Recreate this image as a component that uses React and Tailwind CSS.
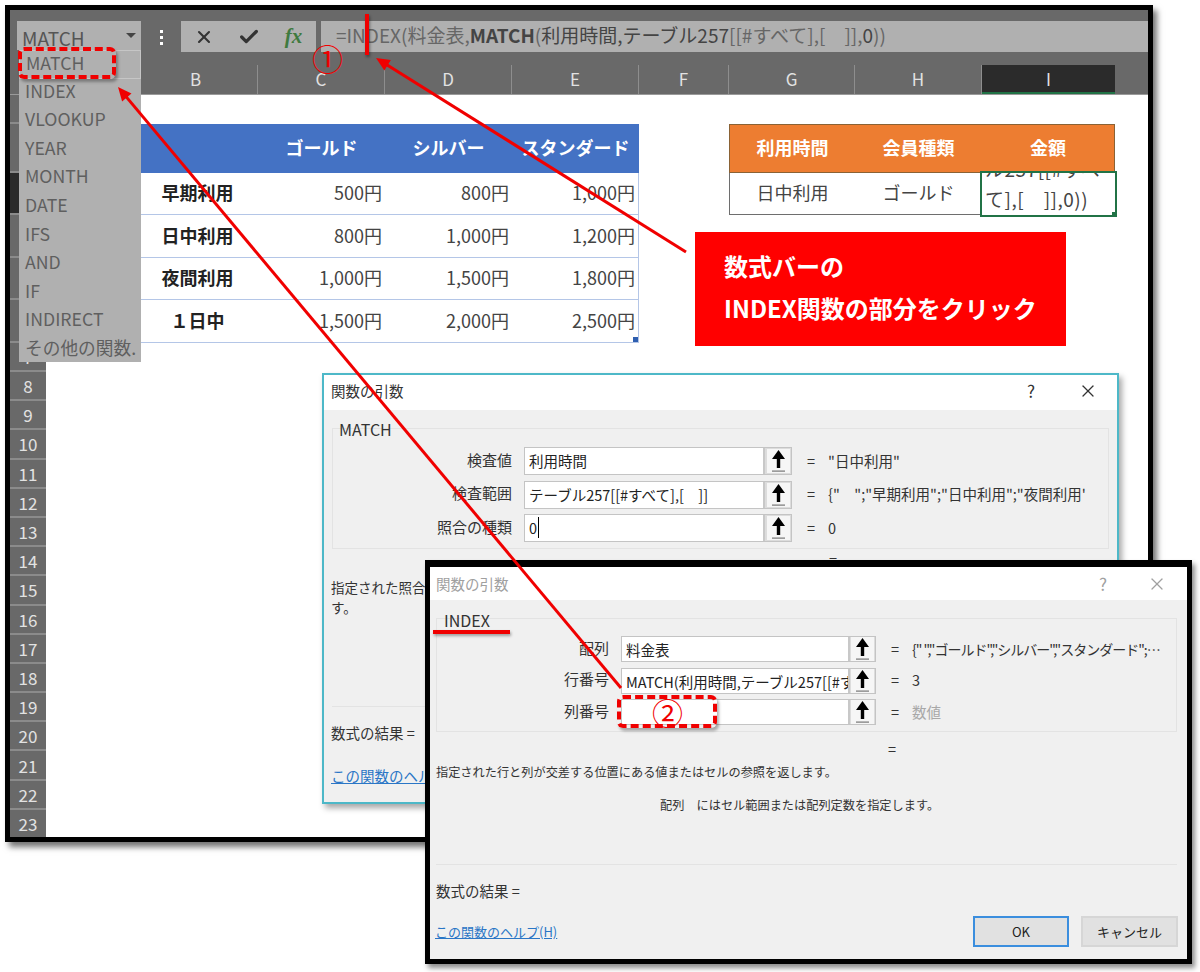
import React from "react";
import { X, Check } from "lucide-react";

const columns = ["", "B", "C", "D", "E", "F", "G", "H"];

const prices = [
  { label: "早期利用", values: ["500円", "800円", "1,000円"] },
  { label: "日中利用", values: ["800円", "1,000円", "1,200円"] },
  { label: "夜間利用", values: ["1,000円", "1,500円", "1,800円"] },
  { label: "１日中", values: ["1,500円", "2,000円", "2,500円"] },
];

const functions = ["MATCH", "INDEX", "VLOOKUP", "YEAR", "MONTH", "DATE", "IFS", "AND", "IF", "INDIRECT", "その他の関数."];

const RowHead = ({ n, active }) => (
  <div className={`col-start-1 flex items-center justify-center border-b-2 border-[#8b8b8b] text-[17px] leading-none ${active ? "bg-[#2b2b2b] text-white" : "bg-[#696969] text-[#e2e2e2]"}`}>
    {n}
  </div>
);

const UpArrow = () => (
  <svg width="17" height="24" viewBox="0 0 17 24" className="text-black">
    <path d="M8.5 1 L15 10 L10.2 10 L10.2 19 L6.8 19 L6.8 10 L2 10 Z" fill="currentColor" />
    <rect x="2" y="21.5" width="13" height="1.2" fill="#777" />
  </svg>
);

const ArgRow = ({ cols, label, value, result, dim, h, btn }) => (
  <div className={`grid items-center gap-x-3 ${cols}`}>
    <div className="pb-[2px] text-right text-[15px] text-[#333]">{label}</div>
    <div className={`flex min-w-0 border border-[#c4c4c4] bg-white ${h}`}>
      <div className="min-w-0 flex-1 overflow-hidden whitespace-nowrap pl-1 text-[14.5px] leading-[25px] text-[#222]">{value}</div>
      <div className={`flex shrink-0 items-center justify-center border-l-2 border-[#c8c8c8] bg-[#dcdcdc] ${btn}`}>
        <div className="flex items-center justify-center bg-[#f6f6f6] px-[3px]">
          <UpArrow />
        </div>
      </div>
    </div>
    <div className={`flex gap-[13px] whitespace-nowrap pb-[1px] pl-[3px] text-[14.5px] ${dim ? "text-[#a8a8a8]" : "text-[#333]"}`}>
      <span className="text-[#333]">=</span>
      <span>{result}</span>
    </div>
  </div>
);

const Arrow = ({ x1, y1, x2, y2 }) => {
  const a = Math.atan2(y1 - y2, x1 - x2);
  const len = 15;
  const p = (d) => `${x2 + len * Math.cos(a + d)},${y2 + len * Math.sin(a + d)}`;
  return (
    <g>
      <line x1={x1} y1={y1} x2={x2 + 8 * Math.cos(a)} y2={y2 + 8 * Math.sin(a)} stroke="#f00000" strokeWidth="3" />
      <polygon points={`${x2},${y2} ${p(0.42)} ${p(-0.42)}`} fill="#f00000" />
    </g>
  );
};

const App = () => {
  return (
    <div className="relative h-[972px] w-[1200px] overflow-hidden bg-white font-['Noto_Sans_CJK_JP','Noto_Sans',sans-serif]">
      {/* excel window */}
      <div className="ml-[5px] mt-[5px] h-[837px] w-[1148px] overflow-hidden border-[5px] border-black bg-[#696969] shadow-[4px_5px_6px_rgba(0,0,0,0.55)]">
        <div className="flex h-[55px] items-start pl-[7px] pt-[11px]">
          <div className="flex h-[29px] w-[124px] justify-between overflow-hidden bg-[#b0b0b0] pl-[5px] pr-[5px] text-[19px] leading-[34px] text-[#555]">
            <span>MATCH</span>
            <span className="mt-[12px] h-0 w-0 border-x-[5px] border-t-[5px] border-x-transparent border-t-[#444]" />
          </div>
          <div className="flex w-[40px] flex-col items-center gap-[3px] pt-[9px]">
            <span className="h-[3px] w-[3px] bg-white" />
            <span className="h-[3px] w-[3px] bg-white" />
            <span className="h-[3px] w-[3px] bg-white" />
          </div>
          <div className="grid h-[31px] w-[135px] grid-cols-3 items-center justify-items-center bg-[#b0b0b0] text-[#333]">
            <X size={20} strokeWidth={2.5} />
            <Check size={22} strokeWidth={3.5} />
            <span className="font-['Liberation_Serif',serif] text-[21px] font-bold italic text-[#3f7a3f]">fx</span>
          </div>
          <div className="ml-[5px] h-[31px] flex-1 whitespace-nowrap bg-[#b0b0b0] pl-[15px] text-[19px] leading-[28px] text-[#666]">
            =INDEX(料金表,<b className="text-[#444]">MATCH</b>(<span className="text-[#444]">利用時間,テーブル257</span>[[#すべて],[　]],<span className="text-[#444]">0</span>))
          </div>
        </div>

        <div className="grid h-[30px] grid-cols-[36px_88px_124px_127px_127px_127px_90px_126px_127px_133px_33px] border-b border-[#9a9a9a]">
          <div />
          {columns.map((c) => (
            <div key={c} className="flex items-center justify-center border-r border-[#8e8e8e] pb-[2px] text-[17px] text-[#e2e2e2]">
              {c}
            </div>
          ))}
          <div className="flex items-center justify-center border-b-2 border-[#217346] bg-[#2b2b2b] text-[17px] text-[#e2e2e2]">I</div>
          <div />
        </div>

        <div className="grid auto-rows-[29.2px] grid-cols-[36px_88px_124px_127px_127px_127px_90px_126px_127px_133px_33px] grid-rows-[29px_49px_42px_43px_42px_43px_29px] bg-white text-[18px] text-[#444]">
          <RowHead n={1} />

          <RowHead n={2} />
          <div />
          <div className="bg-[#4472c4]" />
          <div className="flex items-center justify-center bg-[#4472c4] pb-[3px] font-bold text-white">ゴールド</div>
          <div className="flex items-center justify-center bg-[#4472c4] pb-[3px] font-bold text-white">シルバー</div>
          <div className="flex items-center justify-center whitespace-nowrap bg-[#4472c4] pb-[3px] font-bold text-white">スタンダード</div>
          <div />
          <div className="flex items-center justify-center border-y border-l border-[#8a6235] bg-[#ed7d31] pb-[3px] font-bold text-white">利用時間</div>
          <div className="flex items-center justify-center border-y border-[#8a6235] bg-[#ed7d31] pb-[3px] font-bold text-white">会員種類</div>
          <div className="flex items-center justify-center border-y border-r border-[#8a6235] bg-[#ed7d31] pb-[3px] font-bold text-white">金額</div>
          <div />

          {prices.map((p, i) => (
            <React.Fragment key={p.label}>
              <RowHead n={i + 3} active={i === 0} />
              <div />
              <div className="flex items-center justify-center border-b border-[#b4c6e7] pb-[2px] pl-[3px] font-bold text-[#222]">{p.label}</div>
              {p.values.map((v, j) => (
                <div key={v + j} className={`relative flex items-center justify-end border-b border-[#b4c6e7] pb-[2px] pr-[3px] ${j === 2 ? "border-r" : ""}`}>
                  {v}
                  {i === 3 && j === 2 && <span className="absolute bottom-0 right-0 h-[5px] w-[5px] bg-[#2f5fb0]" />}
                </div>
              ))}
              {i === 0 && (
                <>
                  <div />
                  <div className="flex items-center justify-center border-b border-l border-[#6e6e6e] pb-[2px]">日中利用</div>
                  <div className="flex items-center justify-center border-b border-[#6e6e6e] pb-[2px]">ゴールド</div>
                  <div className="relative z-10 bg-white outline-2 outline-[#217346]">
                    <div className="h-full overflow-hidden pl-[3px] text-[19px] leading-[30px] tracking-[0.5px]">
                      <div className="-mt-[19px] whitespace-nowrap">ル257[[#すべ<br />て],[　]],0))</div>
                    </div>
                    <span className="absolute -bottom-[2px] -right-[2px] h-[5px] w-[5px] bg-[#217346]" />
                  </div>
                </>
              )}
            </React.Fragment>
          ))}

          {Array.from({ length: 17 }, (_, i) => (
            <RowHead key={i} n={i + 7} />
          ))}
        </div>
      </div>

      {/* name box dropdown */}
      <div className="absolute left-[19px] top-[50px] h-[312px] w-[122px] overflow-hidden bg-[#b0b0b0] text-[17.7px] text-[#5f5f5f]">
        {functions.map((f, i) => (
          <div key={f} className={`h-[28.6px] whitespace-nowrap pl-[6px] leading-[23px] ${i === 0 ? "border border-[#c6c6c6] pl-[5px]" : ""}`}>
            {f}
          </div>
        ))}
      </div>
      <div className="absolute left-[18px] top-[47px] h-[32px] w-[98px] rounded-md border-4 border-dashed border-[#f00000] shadow-[2px_3px_3px_rgba(0,0,0,0.3)]" />

      {/* callout */}
      <div className="absolute left-[695px] top-[232px] flex h-[114px] w-[371px] flex-col justify-center gap-[12px] bg-[#ff0000] pb-[4px] pl-[29px] text-[24px] font-bold leading-[30px] text-white">
        <div>数式バーの</div>
        <div className="whitespace-nowrap">INDEX関数の部分をクリック</div>
      </div>

      {/* back dialog */}
      <div className="absolute left-[322px] top-[373px] h-[431px] w-[797px] border-2 border-[#4db8c8] bg-[#f0f0f0] text-[#333] shadow-[3px_4px_6px_rgba(0,0,0,0.35)]">
        <div className="flex h-[35px] items-center justify-between bg-white pb-[3px] pl-[7px] pr-[19px] text-[14.5px]">
          <span>関数の引数</span>
          <div className="flex items-center gap-[43px] text-[17px]">
            <span>?</span>
            <X size={20} strokeWidth={1.5} />
          </div>
        </div>
        <div className="relative mx-[8px] mt-[18px] h-[121px] border border-[#e3e3e3] pt-[18px]">
          <span className="absolute -top-[12px] left-[6px] text-[16px]">MATCH</span>
          <div className="flex flex-col gap-[5.5px]">
            <ArgRow cols="grid-cols-[179px_268px_auto]" h="h-[28px]" btn="w-[28px]" label="検査値" value="利用時間" result={'"日中利用"'} />
            <ArgRow cols="grid-cols-[179px_268px_auto]" h="h-[28px]" btn="w-[28px]" label="検査範囲" value="テーブル257[[#すべて],[　]]" result={'{"　";"早期利用";"日中利用";"夜間利用\''} />
            <ArgRow cols="grid-cols-[179px_268px_auto]" h="h-[28px]" btn="w-[28px]" label="照合の種類" value={<>0<span className="ml-[1px] border-l border-black" /></>} result="0" />
          </div>
        </div>
        <div className="pl-[505px] pt-[1px] text-[14.5px] leading-[20px]">=</div>
        <div className="pl-[7px] pt-[7px] text-[13.5px] leading-[20px]">
          指定された照合の種類に従って検査範囲内を検索し、検査値と一致する要素の相対的な位置を返しま<br />す。
        </div>
        <div className="mx-[8px] mt-[89px] border-t border-[#e3e3e3]" />
        <div className="pl-[7px] pt-[15px] text-[14.5px]">数式の結果 =</div>
        <div className="pl-[7px] pt-[21px] text-[14.5px] text-[#2a76c6] underline">この関数のヘルプ(H)</div>
      </div>

      {/* front dialog */}
      <div className="absolute left-[425px] top-[560px] h-[404px] w-[767px] border-x-[5px] border-b-[5px] border-t-[7px] border-black bg-[#f0f0f0] text-[#333] shadow-[3px_4px_5px_rgba(0,0,0,0.45)]">
        <div className="flex h-[33px] items-center justify-between bg-white pl-[6px] pr-[20px] text-[14.5px] text-[#a0a0a0]">
          <span>関数の引数</span>
          <div className="flex items-center gap-[40px] text-[17px]">
            <span>?</span>
            <X size={20} strokeWidth={1.5} />
          </div>
        </div>
        <div className="relative ml-[6px] mr-[10px] mt-[18px] h-[114px] border border-[#e3e3e3] pt-[17px]">
          <span className="absolute -top-[11px] left-[7px] text-[16px]">INDEX</span>
          <div className="flex flex-col gap-[5.5px]">
            <ArgRow cols="grid-cols-[172px_255px_auto]" h="h-[26px]" btn="w-[27px]" label="配列" value="料金表" result={<span className="text-[14px] tracking-[-1px]">{'{" ","ゴールド","シルバー","スタンダード";…'}</span>} />
            <ArgRow cols="grid-cols-[172px_255px_auto]" h="h-[26px]" btn="w-[27px]" label="行番号" value="MATCH(利用時間,テーブル257[[#す" result="3" />
            <ArgRow cols="grid-cols-[172px_255px_auto]" h="h-[26px]" btn="w-[27px]" label="列番号" value="" result="数値" dim />
          </div>
        </div>
        <div className="pl-[458px] pt-[7px] text-[14.5px] leading-[20px]">=</div>
        <div className="pl-[6px] pt-[2px] text-[12.2px] leading-[22px]">指定された行と列が交差する位置にある値またはセルの参照を返します。</div>
        <div className="pl-[230px] pt-[11px] text-[12.2px] leading-[22px]">配列　にはセル範囲または配列定数を指定します。</div>
        <div className="ml-[6px] mr-[10px] mt-[48px] border-t border-[#e3e3e3]" />
        <div className="pl-[6px] pt-[16px] text-[14.5px] leading-[20px]">数式の結果 =</div>
        <div className="flex items-center justify-between pl-[5px] pr-[9px] pt-[15px] text-[13px]">
          <span className="py-[1px] text-[#2a76c6] underline">この関数のヘルプ(H)</span>
          <div className="flex gap-[12px]">
            <div className="flex h-[31px] w-[96px] items-center justify-center border-2 border-[#3b8ede] bg-[#e1e1e1] text-[#222]">OK</div>
            <div className="flex h-[31px] w-[97px] items-center justify-center border-2 border-[#d6d6d6] bg-[#e1e1e1] text-[#222]">キャンセル</div>
          </div>
        </div>
      </div>
      <div className="absolute left-[433px] top-[630px] h-[4px] w-[77px] bg-[#f00000] shadow-[1px_2px_3px_rgba(0,0,0,0.35)]" />
      <div className="absolute left-[617px] top-[695px] h-[33px] w-[100px] rounded-md border-4 border-dashed border-[#f00000] shadow-[2px_3px_3px_rgba(0,0,0,0.3)]" />

      {/* markers */}
      <div className="absolute left-[365px] top-[14px] h-[41px] w-[4px] bg-[#f00000] shadow-[1px_2px_3px_rgba(0,0,0,0.4)]" />
      <div className="absolute left-[312px] top-[37px] text-[31px] leading-[42px] text-[#f00000]">①</div>
      <div className="absolute left-[652px] top-[691px] text-[31px] leading-[42px] text-[#f00000]">②</div>

      <svg className="pointer-events-none absolute left-0 top-0" width="1200" height="972" viewBox="0 0 1200 972">
        <Arrow x1={686} y1={252} x2={376} y2={58} />
        <Arrow x1={621} y1={688} x2={118} y2={87} />
      </svg>
    </div>
  );
};

export default App;
